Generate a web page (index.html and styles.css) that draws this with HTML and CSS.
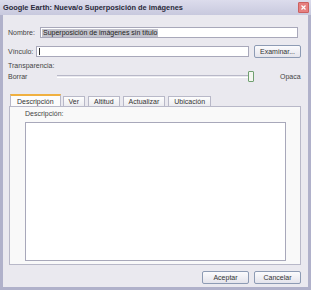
FILE: index.html
```html
<!DOCTYPE html>
<html>
<head>
<meta charset="utf-8">
<link rel="stylesheet" href="styles.css">
</head>
<body>
<div class="window">
  <div class="titlebar">
    <span class="title">Google Earth: Nueva/o Superposición de imágenes</span>
    <span class="close"><svg width="9" height="9" viewBox="0 0 9 9"><path d="M2.5 2.5 L6.5 6.5 M6.5 2.5 L2.5 6.5" stroke="#fff" stroke-width="1.2"/></svg></span>
  </div>
  <div class="body">
    <div class="row row-name">
      <span class="label">Nombre:</span>
      <div class="input input-name"><span class="sel">Superposición de imágenes sin título</span></div>
    </div>
    <div class="row row-link">
      <span class="label">Vínculo:</span>
      <div class="input input-link"><span class="caret"></span></div>
      <div class="btn btn-browse">Examinar...</div>
    </div>
    <div class="label trans">Transparencia:</div>
    <div class="row row-slider">
      <span class="label">Borrar</span>
      <div class="slider"><div class="track"></div><div class="thumb"></div></div>
      <span class="label opaca">Opaca</span>
    </div>
    <div class="tabs">
      <div class="tab active">Descripción</div>
      <div class="tab">Ver</div>
      <div class="tab">Altitud</div>
      <div class="tab">Actualizar</div>
      <div class="tab">Ubicación</div>
    </div>
    <div class="panel">
      <div class="label desc-label">Descripción:</div>
      <div class="textarea"></div>
    </div>
    <div class="buttons">
      <div class="btn btn-ok">Aceptar</div>
      <div class="btn btn-cancel">Cancelar</div>
    </div>
  </div>
</div>
</body>
</html>
```
FILE: styles.css
```css
html, body {
  margin: 0;
  padding: 0;
  background: #eae9ef;
}
.window {
  width: 311px;
  height: 290px;
  box-sizing: border-box;
  display: flex;
  flex-direction: column;
  font-family: "Liberation Sans", Arial, sans-serif;
  font-size: 7px;
  color: #333;
  background: #b0b1ca;
}
.titlebar {
  height: 15px;
  flex: none;
  display: flex;
  align-items: center;
  justify-content: space-between;
  padding: 0 2px 0 3px;
  background: linear-gradient(#dcdcec, #c8c9de);
  box-sizing: border-box;
}
.title {
  font-weight: bold;
  font-size: 7.4px;
  color: #2a2a3a;
}
.close {
  width: 9px;
  height: 9px;
  background: #e68080;
  border: 1px solid #cc6060;
  border-radius: 1px;
  display: flex;
}
.body {
  flex: 1;
  margin: 0 3px 3px 3px;
  background: #eae9ef;
  padding: 12px 5px 0 5px;
  display: flex;
  flex-direction: column;
}
.row {
  display: flex;
  align-items: center;
}
.row > * { flex: none; }
.label {
  color: #444;
  white-space: nowrap;
}
.row-name .label { width: 32px; }
.input {
  height: 11px;
  box-sizing: border-box;
  background: #fff;
  border: 1px solid #a8a8ba;
  display: flex;
  align-items: center;
  padding-left: 1px;
}
.input-name { width: 258px; }
.sel {
  background: #c2c2cc;
  color: #222;
  padding: 0 1px;
  line-height: 8px;
}
.row-link { margin-top: 7px; }
.row-link .label { width: 28px; }
.input-link { width: 213px; }
.caret {
  width: 1px;
  height: 7px;
  background: #333;
  margin-left: 1px;
}
.btn {
  height: 13px;
  box-sizing: border-box;
  border: 1px solid #8d9bb4;
  border-radius: 2px;
  background: linear-gradient(#fbfbfd, #e4e4ec);
  display: flex;
  align-items: center;
  justify-content: center;
  color: #333;
}
.btn-browse {
  width: 47px;
  margin-left: 5px;
}
.trans { margin-top: 4px; }
.row-slider { margin-top: 1px; height: 12px; }
.row-slider .label { width: 49px; }
.slider {
  width: 197px;
  height: 12px;
  display: flex;
  align-items: center;
}
.track {
  width: 191px;
  height: 1px;
  border-top: 1px solid #b8b8c8;
  border-bottom: 1px solid #fff;
}
.thumb {
  width: 6px;
  height: 11px;
  box-sizing: border-box;
  border: 1px solid #70a070;
  background: #f4f6f0;
  border-radius: 1px;
}
.row-slider .opaca { margin-left: 26px; width: auto; }
.tabs {
  margin-top: 12px;
  display: flex;
  align-items: flex-end;
  padding-left: 2px;
  height: 12px;
}
.tab {
  height: 10px;
  box-sizing: border-box;
  padding: 0 5px;
  border: 1px solid #b8b8c8;
  border-bottom: none;
  background: linear-gradient(#fdfdfd, #ececf0);
  margin-right: 3px;
  display: flex;
  align-items: center;
  color: #333;
}
.tab.active {
  height: 12px;
  background: #fcfcfc;
  border-top: 2px solid #f0b040;
  padding: 0 6px;
  margin-right: 2px;
}
.panel {
  width: 292px;
  height: 159px;
  box-sizing: border-box;
  margin-left: 1px;
  border: 1px solid #b8b8c8;
  background: #f9f9f9;
  padding: 3px 0 0 15px;
}
.desc-label { height: 9px; }
.textarea {
  width: 259px;
  height: 137px;
  background: #fff;
  border: 1px solid #a8a8ba;
  margin-top: 3px;
}
.buttons {
  display: flex;
  justify-content: flex-end;
  margin-top: 6px;
  padding-right: 2px;
}
.btn-ok, .btn-cancel { width: 47px; }
.btn-cancel { margin-left: 5px; }
```
